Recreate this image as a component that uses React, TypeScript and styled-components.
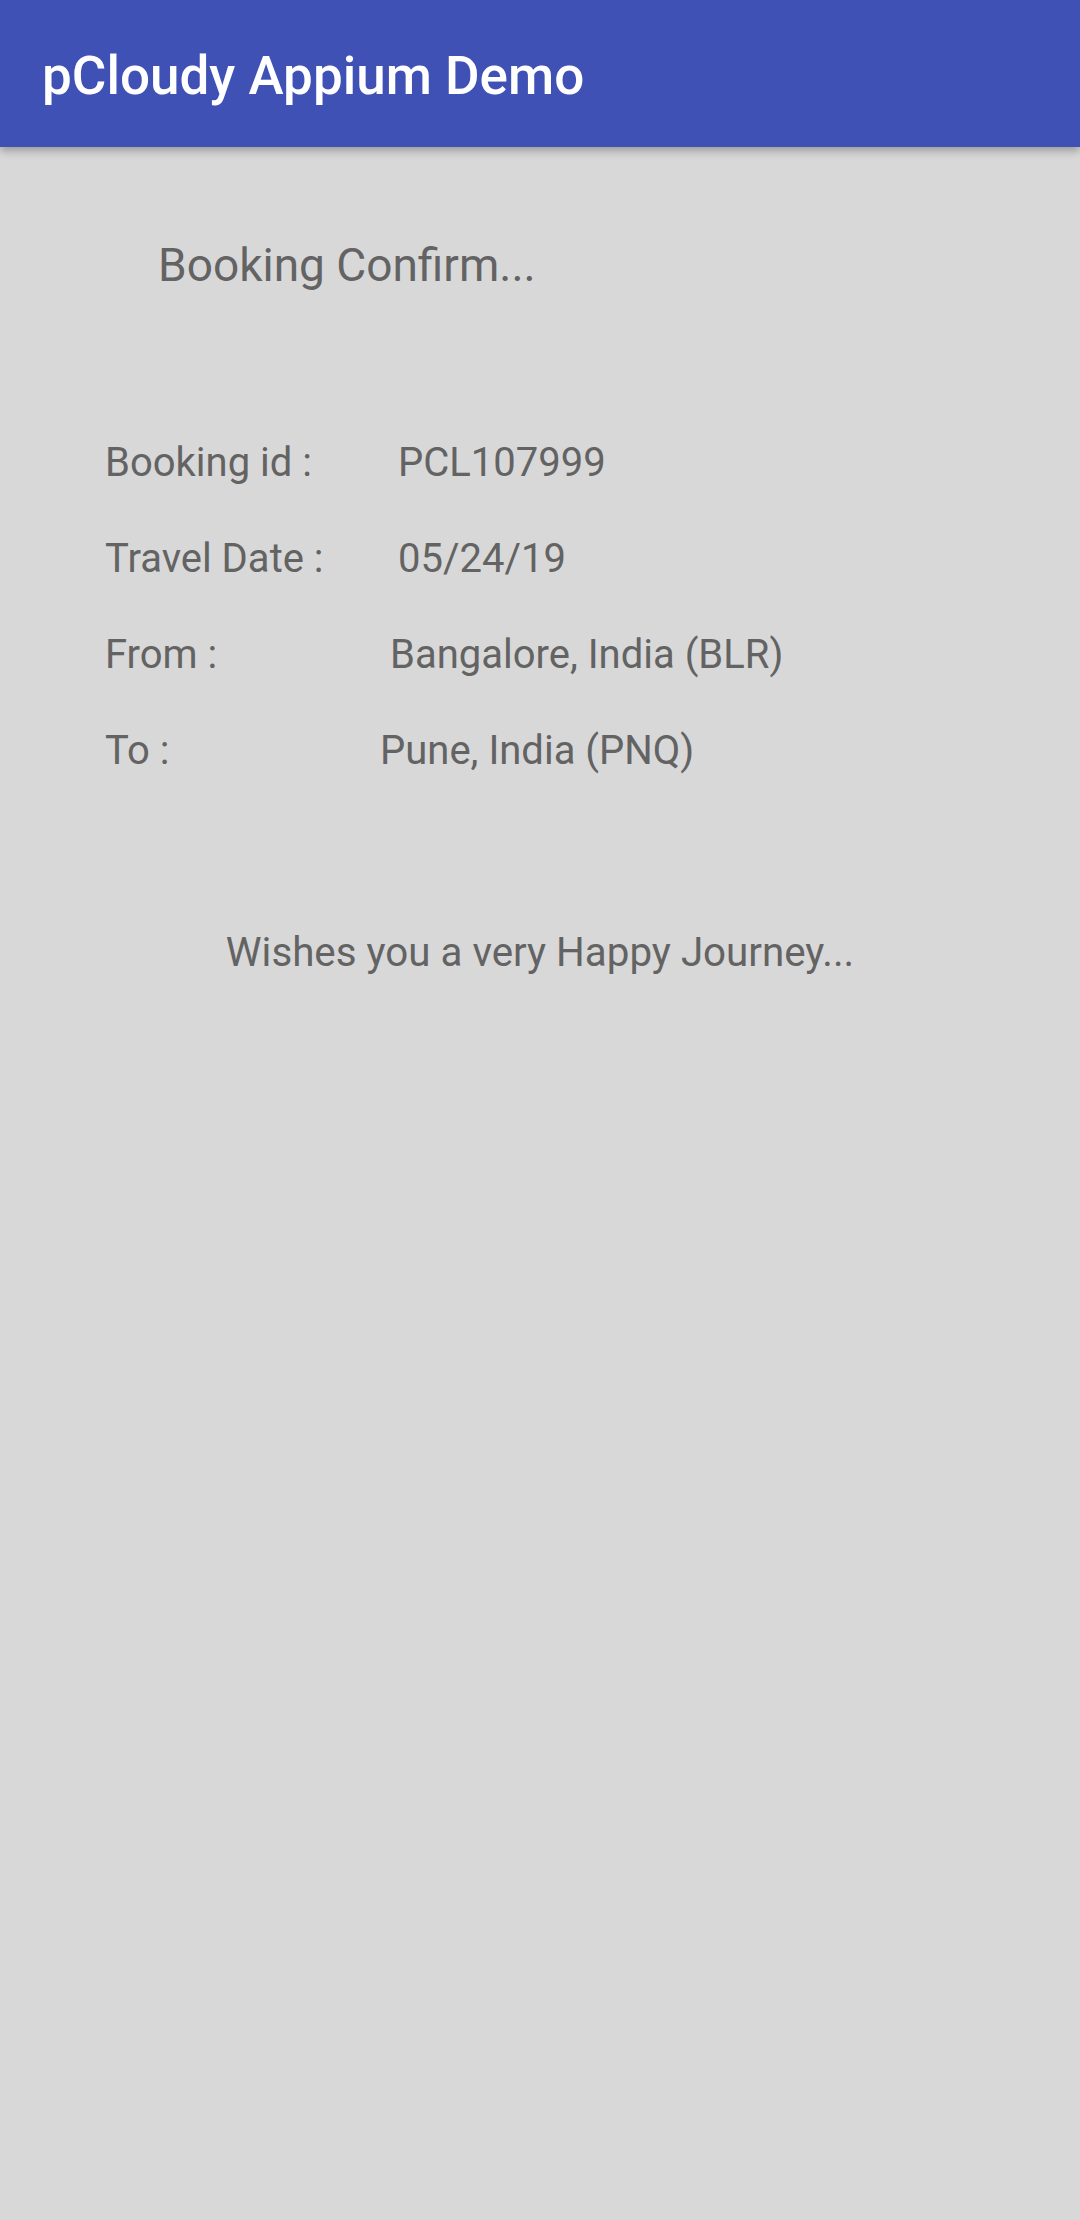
import React from "react";
import styled, { createGlobalStyle } from "styled-components";

const GlobalStyle = createGlobalStyle`
  html, body {
    margin: 0;
    padding: 0;
    background: #d8d8d8;
    font-family: Roboto, "Noto Sans", "Liberation Sans", sans-serif;
  }
`;

const Screen = styled.div`
  width: 1080px;
  min-height: 2220px;
  background: #d8d8d8;
  display: flex;
  flex-direction: column;
`;

const AppBar = styled.header`
  height: 147px;
  box-sizing: border-box;
  padding: 4px 0 0 42px;
  background: #3f51b5;
  display: flex;
  align-items: center;
  box-shadow: 0 4px 8px rgba(0, 0, 0, 0.28);
  position: relative;
  z-index: 1;
`;

const Title = styled.h1`
  margin: 0;
  color: #ffffff;
  font-size: 53px;
  font-weight: 500;
`;

const Content = styled.main`
  display: flex;
  flex-direction: column;
`;

const Heading = styled.h2`
  margin: 88px 0 0 158px;
  font-size: 46px;
  line-height: 60px;
  font-weight: 400;
  color: #636363;
`;

const Details = styled.div`
  margin: 120px 0 0 105px;
  display: flex;
  flex-direction: column;
`;

const Row = styled.div`
  display: grid;
  grid-template-columns: 270px 1fr;
  height: 96px;
  line-height: 96px;
  font-size: 40px;
  color: #636363;
`;

const Label = styled.span``;

const Value = styled.span<{ $shift: number }>`
  margin-left: ${(p) => p.$shift}px;
`;

const Wishes = styled.p`
  margin: 130px 0 0;
  text-align: center;
  font-size: 40.3px;
  line-height: 48px;
  color: #636363;
`;

const rows = [
  { label: "Booking id :", value: "PCL107999", shift: 23 },
  { label: "Travel Date :", value: "05/24/19", shift: 23 },
  { label: "From :", value: "Bangalore, India (BLR)", shift: 15 },
  { label: "To :", value: "Pune, India (PNQ)", shift: 5 },
];

export default function App() {
  return (
    <Screen>
      <GlobalStyle />
      <AppBar>
        <Title>pCloudy Appium Demo</Title>
      </AppBar>
      <Content>
        <Heading>Booking Confirm...</Heading>
        <Details>
          {rows.map((r) => (
            <Row key={r.label}>
              <Label>{r.label}</Label>
              <Value $shift={r.shift}>{r.value}</Value>
            </Row>
          ))}
        </Details>
        <Wishes>Wishes you a very Happy Journey...</Wishes>
      </Content>
    </Screen>
  );
}
